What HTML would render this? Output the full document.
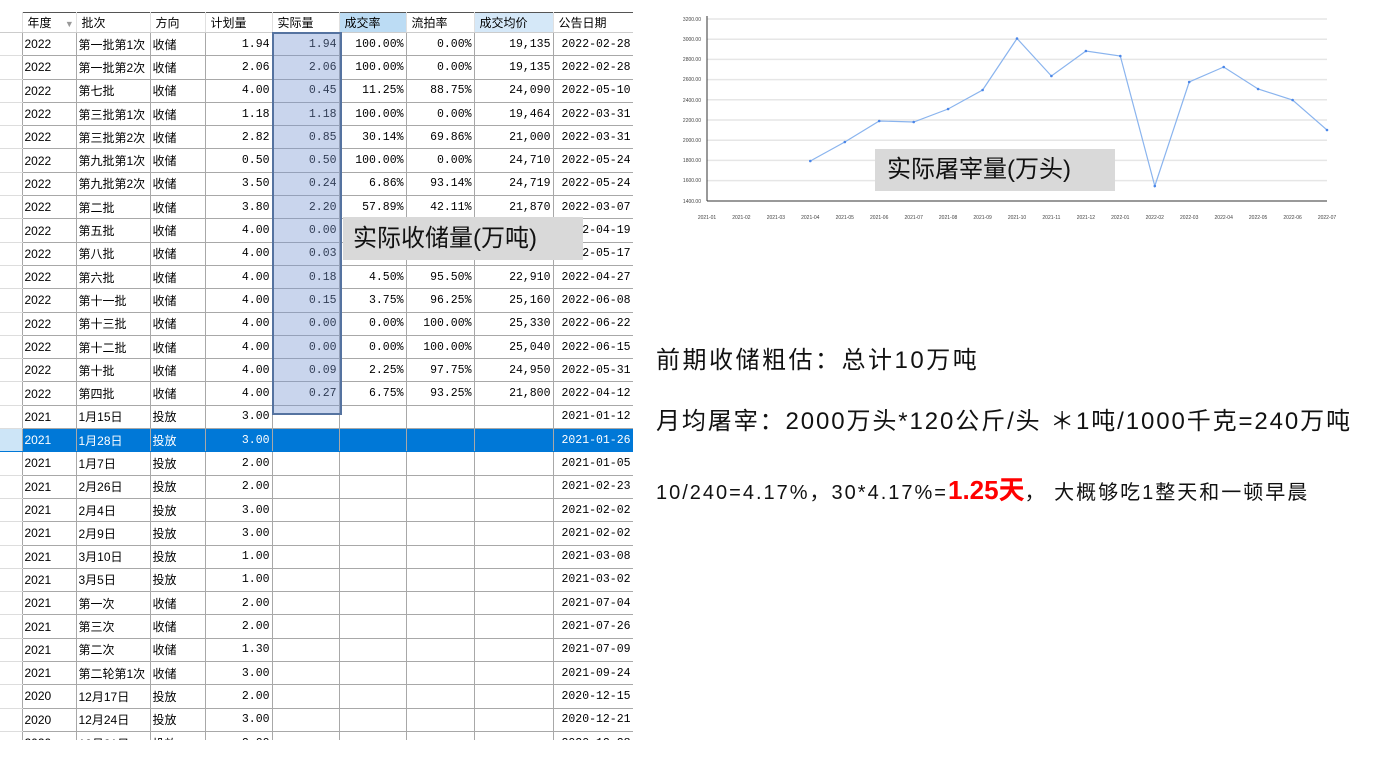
<!DOCTYPE html>
<html><head><meta charset="utf-8"><style>
body{margin:0;width:1387px;height:757px;background:#fff;position:relative;overflow:hidden;font-family:"Liberation Sans","Noto Sans CJK SC",sans-serif}
.tw{position:absolute;left:0;top:12px;width:633px;height:728px;overflow:hidden}
table{border-collapse:collapse;table-layout:fixed;width:633px;font-size:12px;font-family:"Liberation Sans","Noto Sans CJK SC",sans-serif}
td,th{height:22.3px;padding:0 2px;border:1px solid #a8a8a8;white-space:nowrap;overflow:hidden;color:#000}
th{font-weight:normal;text-align:left;height:19px;border:none;border-right:1px solid #e0e0e0;border-top:1px solid #555;border-bottom:1px solid #ccc;padding-left:5px}
td.n{text-align:right;font-family:"Liberation Mono","Noto Sans CJK SC",monospace;font-size:11.5px}
td.h{border:none;border-bottom:1px solid #ddd;background:#fff}
tr.s td{background:#0078d7;color:#fff;border-color:#0078d7 #a8a8a8}
tr.s td.h{background:#cde5f7}
.sel{position:absolute;left:272px;top:20px;width:66px;height:379px;background:rgba(120,150,210,.4);border:2px solid #5573a0}
.lbl{position:absolute;background:#d9d9d9;font-size:24px;color:#111;font-family:"Liberation Sans","Noto Sans CJK SC",sans-serif}
.t{position:absolute;left:656px;color:#111;font-family:"Liberation Sans","Noto Sans CJK SC",sans-serif;white-space:nowrap}
</style></head><body>
<div class="tw"><table>
<colgroup><col style="width:22px"><col style="width:54px"><col style="width:74px"><col style="width:55px"><col style="width:67px"><col style="width:67px"><col style="width:67px"><col style="width:68px"><col style="width:79px"><col style="width:80px"></colgroup>
<tr><th style="border-top:none"></th><th>年度 <span style="color:#999;font-size:9px;margin-left:10px">▼</span></th><th>批次</th><th>方向</th><th>计划量</th><th>实际量</th><th style="background:#bcdcf4">成交率</th><th>流拍率</th><th style="background:#d5e8f8">成交均价</th><th>公告日期</th></tr>
<tr><td class="h"></td><td>2022</td><td>第一批第1次</td><td>收储</td><td class="n">1.94</td><td class="n">1.94</td><td class="n">100.00%</td><td class="n">0.00%</td><td class="n">19,135</td><td class="n">2022-02-28</td></tr>
<tr><td class="h"></td><td>2022</td><td>第一批第2次</td><td>收储</td><td class="n">2.06</td><td class="n">2.06</td><td class="n">100.00%</td><td class="n">0.00%</td><td class="n">19,135</td><td class="n">2022-02-28</td></tr>
<tr><td class="h"></td><td>2022</td><td>第七批</td><td>收储</td><td class="n">4.00</td><td class="n">0.45</td><td class="n">11.25%</td><td class="n">88.75%</td><td class="n">24,090</td><td class="n">2022-05-10</td></tr>
<tr><td class="h"></td><td>2022</td><td>第三批第1次</td><td>收储</td><td class="n">1.18</td><td class="n">1.18</td><td class="n">100.00%</td><td class="n">0.00%</td><td class="n">19,464</td><td class="n">2022-03-31</td></tr>
<tr><td class="h"></td><td>2022</td><td>第三批第2次</td><td>收储</td><td class="n">2.82</td><td class="n">0.85</td><td class="n">30.14%</td><td class="n">69.86%</td><td class="n">21,000</td><td class="n">2022-03-31</td></tr>
<tr><td class="h"></td><td>2022</td><td>第九批第1次</td><td>收储</td><td class="n">0.50</td><td class="n">0.50</td><td class="n">100.00%</td><td class="n">0.00%</td><td class="n">24,710</td><td class="n">2022-05-24</td></tr>
<tr><td class="h"></td><td>2022</td><td>第九批第2次</td><td>收储</td><td class="n">3.50</td><td class="n">0.24</td><td class="n">6.86%</td><td class="n">93.14%</td><td class="n">24,719</td><td class="n">2022-05-24</td></tr>
<tr><td class="h"></td><td>2022</td><td>第二批</td><td>收储</td><td class="n">3.80</td><td class="n">2.20</td><td class="n">57.89%</td><td class="n">42.11%</td><td class="n">21,870</td><td class="n">2022-03-07</td></tr>
<tr><td class="h"></td><td>2022</td><td>第五批</td><td>收储</td><td class="n">4.00</td><td class="n">0.00</td><td class="n"></td><td class="n"></td><td class="n"></td><td class="n">2022-04-19</td></tr>
<tr><td class="h"></td><td>2022</td><td>第八批</td><td>收储</td><td class="n">4.00</td><td class="n">0.03</td><td class="n"></td><td class="n"></td><td class="n"></td><td class="n">2022-05-17</td></tr>
<tr><td class="h"></td><td>2022</td><td>第六批</td><td>收储</td><td class="n">4.00</td><td class="n">0.18</td><td class="n">4.50%</td><td class="n">95.50%</td><td class="n">22,910</td><td class="n">2022-04-27</td></tr>
<tr><td class="h"></td><td>2022</td><td>第十一批</td><td>收储</td><td class="n">4.00</td><td class="n">0.15</td><td class="n">3.75%</td><td class="n">96.25%</td><td class="n">25,160</td><td class="n">2022-06-08</td></tr>
<tr><td class="h"></td><td>2022</td><td>第十三批</td><td>收储</td><td class="n">4.00</td><td class="n">0.00</td><td class="n">0.00%</td><td class="n">100.00%</td><td class="n">25,330</td><td class="n">2022-06-22</td></tr>
<tr><td class="h"></td><td>2022</td><td>第十二批</td><td>收储</td><td class="n">4.00</td><td class="n">0.00</td><td class="n">0.00%</td><td class="n">100.00%</td><td class="n">25,040</td><td class="n">2022-06-15</td></tr>
<tr><td class="h"></td><td>2022</td><td>第十批</td><td>收储</td><td class="n">4.00</td><td class="n">0.09</td><td class="n">2.25%</td><td class="n">97.75%</td><td class="n">24,950</td><td class="n">2022-05-31</td></tr>
<tr><td class="h"></td><td>2022</td><td>第四批</td><td>收储</td><td class="n">4.00</td><td class="n">0.27</td><td class="n">6.75%</td><td class="n">93.25%</td><td class="n">21,800</td><td class="n">2022-04-12</td></tr>
<tr><td class="h"></td><td>2021</td><td>1月15日</td><td>投放</td><td class="n">3.00</td><td></td><td></td><td></td><td></td><td class="n">2021-01-12</td></tr>
<tr class="s"><td class="h"></td><td>2021</td><td>1月28日</td><td>投放</td><td class="n">3.00</td><td></td><td></td><td></td><td></td><td class="n">2021-01-26</td></tr>
<tr><td class="h"></td><td>2021</td><td>1月7日</td><td>投放</td><td class="n">2.00</td><td></td><td></td><td></td><td></td><td class="n">2021-01-05</td></tr>
<tr><td class="h"></td><td>2021</td><td>2月26日</td><td>投放</td><td class="n">2.00</td><td></td><td></td><td></td><td></td><td class="n">2021-02-23</td></tr>
<tr><td class="h"></td><td>2021</td><td>2月4日</td><td>投放</td><td class="n">3.00</td><td></td><td></td><td></td><td></td><td class="n">2021-02-02</td></tr>
<tr><td class="h"></td><td>2021</td><td>2月9日</td><td>投放</td><td class="n">3.00</td><td></td><td></td><td></td><td></td><td class="n">2021-02-02</td></tr>
<tr><td class="h"></td><td>2021</td><td>3月10日</td><td>投放</td><td class="n">1.00</td><td></td><td></td><td></td><td></td><td class="n">2021-03-08</td></tr>
<tr><td class="h"></td><td>2021</td><td>3月5日</td><td>投放</td><td class="n">1.00</td><td></td><td></td><td></td><td></td><td class="n">2021-03-02</td></tr>
<tr><td class="h"></td><td>2021</td><td>第一次</td><td>收储</td><td class="n">2.00</td><td></td><td></td><td></td><td></td><td class="n">2021-07-04</td></tr>
<tr><td class="h"></td><td>2021</td><td>第三次</td><td>收储</td><td class="n">2.00</td><td></td><td></td><td></td><td></td><td class="n">2021-07-26</td></tr>
<tr><td class="h"></td><td>2021</td><td>第二次</td><td>收储</td><td class="n">1.30</td><td></td><td></td><td></td><td></td><td class="n">2021-07-09</td></tr>
<tr><td class="h"></td><td>2021</td><td>第二轮第1次</td><td>收储</td><td class="n">3.00</td><td></td><td></td><td></td><td></td><td class="n">2021-09-24</td></tr>
<tr><td class="h"></td><td>2020</td><td>12月17日</td><td>投放</td><td class="n">2.00</td><td></td><td></td><td></td><td></td><td class="n">2020-12-15</td></tr>
<tr><td class="h"></td><td>2020</td><td>12月24日</td><td>投放</td><td class="n">3.00</td><td></td><td></td><td></td><td></td><td class="n">2020-12-21</td></tr>
<tr><td class="h"></td><td>2020</td><td>12月31日</td><td>投放</td><td class="n">2.00</td><td></td><td></td><td></td><td></td><td class="n">2020-12-28</td></tr>
</table>
<div class="sel"></div>
</div>
<div class="lbl" style="left:343px;top:217px;width:240px;height:43px;line-height:43px;padding-left:10px;box-sizing:border-box">实际收储量(万吨)</div>

<svg style="position:absolute;left:670px;top:0" width="717" height="230" font-family="Liberation Sans" font-size="5" fill="#444">
<g stroke="#e6e6e6" stroke-width="1.5">
<line x1="37" y1="19" x2="657" y2="19"/><line x1="37" y1="39.2" x2="657" y2="39.2"/><line x1="37" y1="59.4" x2="657" y2="59.4"/><line x1="37" y1="79.6" x2="657" y2="79.6"/><line x1="37" y1="99.8" x2="657" y2="99.8"/><line x1="37" y1="120" x2="657" y2="120"/><line x1="37" y1="140.2" x2="657" y2="140.2"/><line x1="37" y1="160.4" x2="657" y2="160.4"/><line x1="37" y1="180.6" x2="657" y2="180.6"/>
</g>
<line x1="37" y1="16" x2="37" y2="201" stroke="#333"/><line x1="37" y1="201" x2="657" y2="201" stroke="#333"/>
<g text-anchor="end"><text x="31" y="21">3200.00</text><text x="31" y="41">3000.00</text><text x="31" y="61">2800.00</text><text x="31" y="81">2600.00</text><text x="31" y="102">2400.00</text><text x="31" y="122">2200.00</text><text x="31" y="142">2000.00</text><text x="31" y="162">1800.00</text><text x="31" y="182">1600.00</text><text x="31" y="203">1400.00</text></g>
<g text-anchor="middle">
<text x="37" y="219">2021-01</text><text x="71.4" y="219">2021-02</text><text x="105.9" y="219">2021-03</text><text x="140.3" y="219">2021-04</text><text x="174.8" y="219">2021-05</text><text x="209.2" y="219">2021-06</text><text x="243.7" y="219">2021-07</text><text x="278.1" y="219">2021-08</text><text x="312.6" y="219">2021-09</text><text x="347" y="219">2021-10</text><text x="381.4" y="219">2021-11</text><text x="415.9" y="219">2021-12</text><text x="450.3" y="219">2022-01</text><text x="484.8" y="219">2022-02</text><text x="519.2" y="219">2022-03</text><text x="553.7" y="219">2022-04</text><text x="588.1" y="219">2022-05</text><text x="622.6" y="219">2022-06</text><text x="657" y="219">2022-07</text>
</g>
<polyline fill="none" stroke="#8ab4ee" stroke-width="1.2" points="140.3,161 174.8,142 209.2,121 243.7,122 278.1,109 312.6,90 347,38.5 381.4,76 415.9,51 450.3,56 484.8,186 519.2,82 553.7,67 588.1,89 622.6,100 657,130"/>
<g fill="#4a86e8"><circle cx="140.3" cy="161" r="1.3"/><circle cx="174.8" cy="142" r="1.3"/><circle cx="209.2" cy="121" r="1.3"/><circle cx="243.7" cy="122" r="1.3"/><circle cx="278.1" cy="109" r="1.3"/><circle cx="312.6" cy="90" r="1.3"/><circle cx="347" cy="38.5" r="1.3"/><circle cx="381.4" cy="76" r="1.3"/><circle cx="415.9" cy="51" r="1.3"/><circle cx="450.3" cy="56" r="1.3"/><circle cx="484.8" cy="186" r="1.3"/><circle cx="519.2" cy="82" r="1.3"/><circle cx="553.7" cy="67" r="1.3"/><circle cx="588.1" cy="89" r="1.3"/><circle cx="622.6" cy="100" r="1.3"/><circle cx="657" cy="130" r="1.3"/></g>
</svg>
<div class="lbl" style="left:875px;top:149px;width:240px;height:42px;line-height:42px;padding-left:12px;box-sizing:border-box">实际屠宰量(万头)</div>

<div class="t" style="top:345px;font-size:24px;line-height:32px;letter-spacing:2.5px">前期收储粗估：总计10万吨</div>
<div class="t" style="top:406px;font-size:24px;line-height:32px;letter-spacing:1.9px">月均屠宰：2000万头*120公斤/头 ＊1吨/1000千克=240万吨</div>
<div class="t" style="top:474px;font-size:20px;line-height:32px;letter-spacing:2px">10/240=4.17%，30*4.17%=<b style="color:#ff0000;font-size:26px;letter-spacing:0">1.25天</b>， 大概够吃1整天和一顿早晨</div>
</body></html>
